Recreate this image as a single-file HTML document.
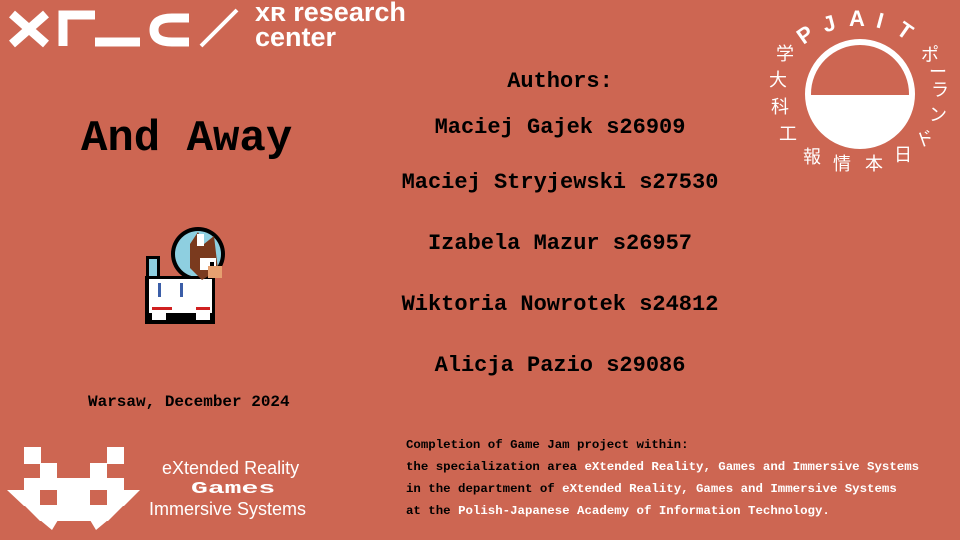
<!DOCTYPE html>
<html><head><meta charset="utf-8"><style>
*{margin:0;padding:0}
body{width:960px;height:540px;background:#cd6652;position:relative;overflow:hidden;font-family:"Liberation Mono",monospace;}
.t{position:absolute;white-space:nowrap;color:#000;font-weight:bold;line-height:1}
.a{font-size:22px;left:360px;width:400px;text-align:center}
.b{font-size:12.4px;left:406px}
.w{color:#fff}
.s{position:absolute;font-family:"Liberation Sans",sans-serif;color:#fff;white-space:nowrap;line-height:1}
</style></head><body>
<svg width="960" height="540" style="position:absolute;left:0;top:0">
<g stroke="#fff" stroke-width="9" fill="none">
<path d="M12 14 L46 44 M46 14 L12 44"/>
<path d="M63 46 V15 H95"/>
<path d="M95 42 H140"/>
<path d="M189 18 H172 Q154 18 154 30 Q154 42 172 42 H189"/>
</g>
<path d="M201 46 L237 10" stroke="#fff" stroke-width="4"/>
<circle cx="860" cy="94" r="52" fill="none" stroke="#fff" stroke-width="6"/>
<path d="M808 95 H912 A52 52 0 0 1 808 95Z" fill="#fff"/>
<g fill="#fff">
<rect x="24" y="447" width="17" height="17"/><rect x="107" y="447" width="17" height="17"/>
<rect x="40" y="463" width="17" height="16"/><rect x="90" y="463" width="17" height="16"/>
<rect x="24" y="478" width="100" height="13"/>
<path d="M7 490 H140 L124 506 H24Z"/>
<path d="M24 505 H124 L108 521 H40Z"/>
<path d="M40 520 H58 L52 530 Z M90 520 H108 L96 530Z"/>
</g>
<g fill="#cd6652"><rect x="40" y="490" width="17" height="15"/><rect x="90" y="490" width="17" height="15"/></g>
<g>
<circle cx="198" cy="254" r="27" fill="#000"/>
<circle cx="198" cy="254" r="23" fill="#8ecfe0"/>
<rect x="146" y="256" width="14" height="30" fill="#000"/>
<rect x="149" y="259" width="8" height="25" fill="#8ecfe0"/>
<rect x="145" y="276" width="70" height="48" fill="#000"/>
<rect x="149" y="279" width="63" height="34" fill="#fff"/>
<rect x="152" y="312" width="14" height="8" fill="#fff"/><rect x="196" y="312" width="14" height="8" fill="#fff"/>
<rect x="152" y="307" width="20" height="3" fill="#d02020"/><rect x="196" y="307" width="14" height="3" fill="#d02020"/>
<rect x="158" y="283" width="3" height="14" fill="#3b5ea8"/><rect x="180" y="283" width="3" height="14" fill="#3b5ea8"/>
<path d="M190 244 L198 232 L204 244 L214 236 L218 270 L202 280 L190 268Z" fill="#7a3a1e"/>
<rect x="200" y="258" width="16" height="12" fill="#fff"/>
<rect x="208" y="266" width="14" height="12" fill="#e6a070"/>
<rect x="210" y="262" width="4" height="4" fill="#000"/>
<rect x="197" y="234" width="7" height="12" fill="#fff"/>
</g>
</svg>
<div class="s" style="left:255px;top:-1px;font-size:27px;font-weight:bold">xʀ research</div>
<div class="s" style="left:255px;top:24px;font-size:27px;font-weight:bold">center</div>
<div class="s" style="font-family:'Liberation Sans','Noto Sans CJK JP',sans-serif;font-size:18px">
<span style="position:absolute;left:798px;top:24px;font-size:22px;font-weight:bold;transform:rotate(-35deg)">P</span>
<span style="position:absolute;left:823px;top:13px;font-size:22px;font-weight:bold;transform:rotate(-15deg)">J</span>
<span style="position:absolute;left:849px;top:8px;font-size:22px;font-weight:bold">A</span>
<span style="position:absolute;left:877px;top:10px;font-size:22px;font-weight:bold;transform:rotate(15deg)">I</span>
<span style="position:absolute;left:898px;top:20px;font-size:22px;font-weight:bold;transform:rotate(35deg)">T</span>
<span style="position:absolute;left:776px;top:45px">学</span>
<span style="position:absolute;left:769px;top:71px">大</span>
<span style="position:absolute;left:771px;top:98px">科</span>
<span style="position:absolute;left:779px;top:125px">工</span>
<span style="position:absolute;left:803px;top:148px">報</span>
<span style="position:absolute;left:833px;top:155px">情</span>
<span style="position:absolute;left:865px;top:155px">本</span>
<span style="position:absolute;left:894px;top:146px">日</span>
<span style="position:absolute;left:916px;top:130px;transform:rotate(-20deg)">ド</span>
<span style="position:absolute;left:929px;top:106px">ン</span>
<span style="position:absolute;left:931px;top:81px">ラ</span>
<span style="position:absolute;left:929px;top:63px">ー</span>
<span style="position:absolute;left:921px;top:46px">ポ</span>
</div>
<div class="t" style="left:81px;top:117px;font-size:44px">And Away</div>
<div class="t" style="left:88px;top:394px;font-size:16px">Warsaw, December 2024</div>
<div class="t a" style="top:71px">Authors:</div>
<div class="t a" style="top:117px">Maciej Gajek s26909</div>
<div class="t a" style="top:172px">Maciej Stryjewski s27530</div>
<div class="t a" style="top:233px">Izabela Mazur s26957</div>
<div class="t a" style="top:294px">Wiktoria Nowrotek s24812</div>
<div class="t a" style="top:355px">Alicja Pazio s29086</div>
<div class="t b" style="top:439px">Completion of Game Jam project within:</div>
<div class="t b" style="top:461px">the specialization area <span class="w">eXtended Reality, Games and Immersive Systems</span></div>
<div class="t b" style="top:483px">in the department of <span class="w">eXtended Reality, Games and Immersive Systems</span></div>
<div class="t b" style="top:505px">at the <span class="w">Polish-Japanese Academy of Information Technology.</span></div>
<div class="s" style="left:162px;top:459px;font-size:18px">eXtended Reality</div>
<div class="s" style="left:191px;top:481px;font-size:17px;font-weight:bold;font-family:'Liberation Mono',monospace;transform-origin:left top;transform:scaleX(1.65)">Games</div>
<div class="s" style="left:149px;top:500px;font-size:18px">Immersive Systems</div>
</body></html>
